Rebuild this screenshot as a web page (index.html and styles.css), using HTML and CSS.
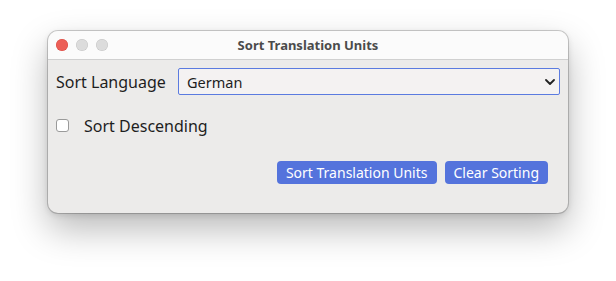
FILE: index.html
```html
<!DOCTYPE html>
<html lang="en">
<head>
<meta charset="utf-8">
<title>Sort Translation Units</title>
<link rel="stylesheet" href="styles.css">
</head>
<body>
<div class="window">
  <div class="titlebar">
    <div class="lights">
      <span class="light red"></span>
      <span class="light"></span>
      <span class="light"></span>
    </div>
    <div class="title">Sort Translation Units</div>
    <div></div>
  </div>
  <div class="content">
    <div class="row lang-row">
      <label class="label" for="lang">Sort Language</label>
      <div class="select-wrap">
        <select id="lang" class="select">
          <option>German</option>
        </select>
        <svg class="chevron" width="10" height="6" viewBox="0 0 10 6"><path d="M1 1 L5 5 L9 1" fill="none" stroke="#222" stroke-width="1.8" stroke-linecap="round" stroke-linejoin="round"/></svg>
      </div>
    </div>
    <div class="row check-row">
      <input type="checkbox" id="desc" class="check">
      <label for="desc" class="check-label">Sort Descending</label>
    </div>
    <div class="buttons">
      <button class="btn">Sort Translation Units</button>
      <button class="btn">Clear Sorting</button>
    </div>
  </div>
</div>
</body>
</html>
```

FILE: styles.css
```css
* { box-sizing: border-box; }
html, body { margin: 0; background: #ffffff; height: 100%; }
body {
  padding: 31px 0 0 48px;
  font-family: "Noto Sans", "Open Sans", sans-serif;
  color: #1e1e1e;
}
.window {
  width: 520px;
  height: 182px;
  background: #ecebea;
  border-radius: 10px;
  box-shadow: 0 0 0 1px rgba(0,0,0,0.18), 0 16px 36px rgba(0,0,0,0.28), 0 2px 6px rgba(0,0,0,0.12);
  overflow: hidden;
}
.titlebar {
  height: 29px;
  background: #fbfbfb;
  border-bottom: 1px solid #d0d0d0;
  display: grid;
  grid-template-columns: 1fr auto 1fr;
  align-items: center;
}
.lights {
  display: flex;
  gap: 8px;
  padding-left: 8px;
}
.light {
  width: 12px;
  height: 12px;
  border-radius: 50%;
  background: #dcdcdc;
  box-shadow: inset 0 0 0 0.5px rgba(0,0,0,0.12);
}
.light.red { background: #ec5f57; box-shadow: inset 0 0 0 0.5px rgba(200,40,30,0.5); }
.title {
  font-weight: bold;
  font-size: 13px;
  color: #4b4b4b;
}
.content { padding: 0 8px; }
.row { display: flex; align-items: center; }
.lang-row { margin-top: 8px; height: 27px; }
.label { font-size: 16px; width: 122px; }
.select-wrap { position: relative; flex: 1; height: 27px; }
.select {
  appearance: none;
  -webkit-appearance: none;
  width: 100%;
  height: 27px;
  background: #f4f2f2;
  border: 1px solid #5b7be0;
  border-radius: 2px;
  padding: 0 8px;
  font-family: inherit;
  font-size: 14.5px;
  color: #1e1e1e;
  outline: none;
}
.chevron { position: absolute; right: 5px; top: 11px; pointer-events: none; }
.check-row { margin-top: 21px; height: 20px; }
.check {
  appearance: none;
  -webkit-appearance: none;
  width: 13px;
  height: 13px;
  margin: 0;
  background: #ffffff;
  border: 1px solid #9a9a9a;
  border-radius: 3px;
  position: relative;
  top: -1px;
}
.check-label { font-size: 16px; margin-left: 15px; }
.buttons {
  display: flex;
  justify-content: flex-end;
  gap: 8px;
  margin-top: 25px;
  padding-right: 12px;
}
.btn {
  height: 23px;
  background: #5473dc;
  color: #ffffff;
  border: none;
  border-radius: 4px;
  font-family: inherit;
  font-size: 14px;
  padding: 0 9px;
}
```
